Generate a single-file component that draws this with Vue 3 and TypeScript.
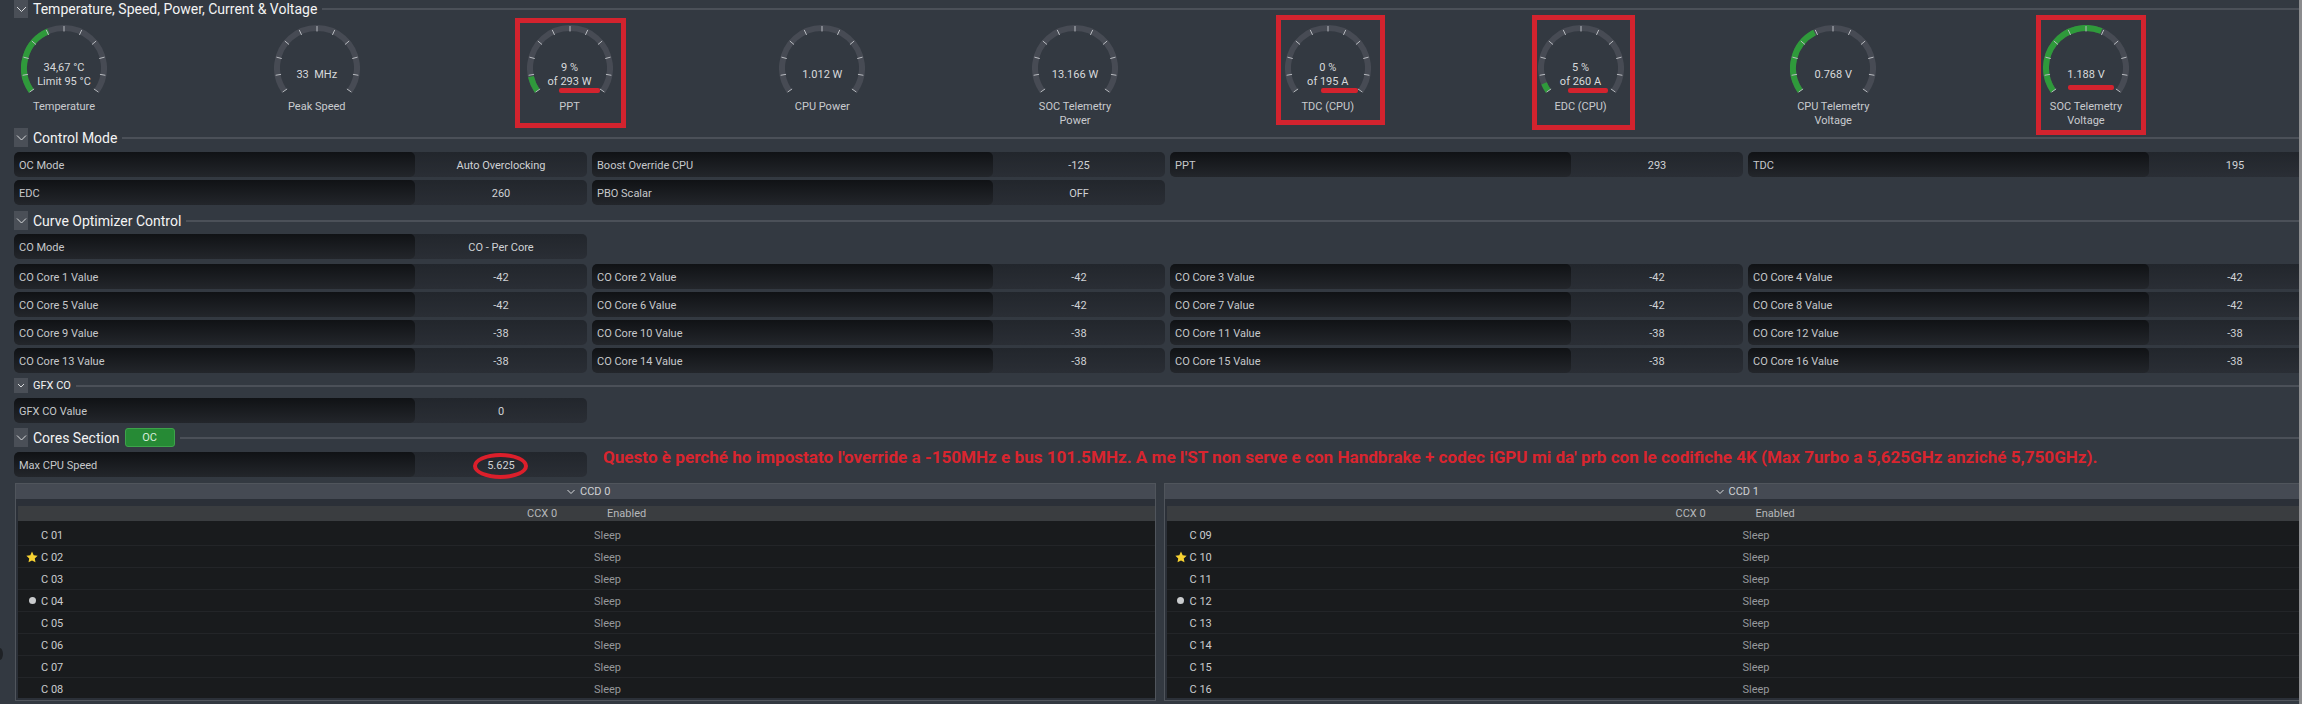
<script setup lang="ts">
interface Gauge { lines: string[]; label: string[]; fill: number }
const gauges: Gauge[] = [
  { lines: ['34,67 °C', 'Limit 95 °C'], label: ['Temperature'], fill: 0.408 },
  { lines: ['33  MHz'], label: ['Peak Speed'], fill: 0 },
  { lines: ['9 %', 'of 293 W'], label: ['PPT'], fill: 0.09 },
  { lines: ['1.012 W'], label: ['CPU Power'], fill: 0 },
  { lines: ['13.166 W'], label: ['SOC Telemetry', 'Power'], fill: 0 },
  { lines: ['0 %', 'of 195 A'], label: ['TDC (CPU)'], fill: 0 },
  { lines: ['5 %', 'of 260 A'], label: ['EDC (CPU)'], fill: 0.05 },
  { lines: ['0.768 V'], label: ['CPU Telemetry', 'Voltage'], fill: 0.39 },
  { lines: ['1.188 V'], label: ['SOC Telemetry', 'Voltage'], fill: 0.59 },
]
const C = 43
const polar = (deg: number, r: number): [number, number] => {
  const a = (deg * Math.PI) / 180
  return [C + r * Math.sin(a), C - r * Math.cos(a)]
}
const arc = (from: number, to: number): string => {
  const [x1, y1] = polar(from, 40)
  const [x2, y2] = polar(to, 40)
  return `M${x1.toFixed(2)} ${y1.toFixed(2)}A40 40 0 ${to - from > 180 ? 1 : 0} 1 ${x2.toFixed(2)} ${y2.toFixed(2)}`
}
const ring = arc(-125, 125)
const fillPath = (f: number): string => arc(-125, -125 + 250 * f)
const ticks = Array.from({ length: 11 }, (_, i) => {
  const d = -125 + i * 25
  const [x1, y1] = polar(d, 36.5)
  const [x2, y2] = polar(d, 42)
  return { x1, y1, x2, y2 }
})

const control = [
  ['OC Mode', 'Auto Overclocking'], ['Boost Override CPU', '-125'], ['PPT', '293'], ['TDC', '195'],
  ['EDC', '260'], ['PBO Scalar', 'OFF'],
]
const coValues = [-42, -42, -42, -42, -42, -42, -42, -42, -38, -38, -38, -38, -38, -38, -38, -38]
const coRows = coValues.map((v, i) => [`CO Core ${i + 1} Value`, String(v)])

const pad = (n: number): string => String(n).padStart(2, '0')
const ccds = [0, 1].map((c) => ({
  name: `CCD ${c}`,
  cores: Array.from({ length: 8 }, (_, i) => ({
    name: `C ${pad(c * 8 + i + 1)}`,
    star: i === 1,
    dot: i === 3,
  })),
}))
</script>

<template>
  <div class="page">
    <main class="main">
      <header class="head first">
        <span class="chev"><svg width="14" height="18" viewBox="0 0 14 18"><polyline points="3,7 7.5,11.5 12,7" /></svg></span>
        <span class="title">Temperature, Speed, Power, Current &amp; Voltage</span>
        <span class="rule"></span>
      </header>

      <section class="gauges">
        <div v-for="g in gauges" :key="g.label.join()" class="gauge">
          <div class="dial">
            <svg width="86" height="70" viewBox="0 0 86 70">
              <path :d="ring" class="ring" />
              <path v-if="g.fill > 0" :d="fillPath(g.fill)" class="fill" />
              <line v-for="(t, i) in ticks" :key="i" :x1="t.x1" :y1="t.y1" :x2="t.x2" :y2="t.y2" class="tick" />
            </svg>
            <div class="read"><span v-for="l in g.lines" :key="l">{{ l }}</span></div>
          </div>
          <div class="glabel"><span v-for="l in g.label" :key="l">{{ l }}</span></div>
        </div>
      </section>

      <header class="head">
        <span class="chev"><svg width="14" height="19" viewBox="0 0 14 19"><polyline points="3,7.5 7.5,12 12,7.5" /></svg></span>
        <span class="title">Control Mode</span>
        <span class="rule"></span>
      </header>
      <section class="grid g-control">
        <div v-for="r in control" :key="r[0]" class="row">
          <span class="k">{{ r[0] }}</span><span class="v">{{ r[1] }}</span>
        </div>
      </section>

      <header class="head h-curve">
        <span class="chev"><svg width="14" height="19" viewBox="0 0 14 19"><polyline points="3,7.5 7.5,12 12,7.5" /></svg></span>
        <span class="title">Curve Optimizer Control</span>
        <span class="rule"></span>
      </header>
      <section class="grid g-mode">
        <div class="row"><span class="k">CO Mode</span><span class="v">CO - Per Core</span></div>
      </section>
      <section class="grid g-core">
        <div v-for="r in coRows" :key="r[0]" class="row">
          <span class="k">{{ r[0] }}</span><span class="v">{{ r[1] }}</span>
        </div>
      </section>

      <header class="head small">
        <span class="chev"><svg width="14" height="15" viewBox="0 0 14 15"><polyline points="4,6 7,9 10,6" /></svg></span>
        <span class="title">GFX CO</span>
        <span class="rule"></span>
      </header>
      <section class="grid g-gfx">
        <div class="row"><span class="k">GFX CO Value</span><span class="v">0</span></div>
      </section>

      <header class="head h-cores">
        <span class="chev"><svg width="14" height="19" viewBox="0 0 14 19"><polyline points="3,7.5 7.5,12 12,7.5" /></svg></span>
        <span class="title">Cores Section</span>
        <span class="oc">OC</span>
        <span class="rule"></span>
      </header>
      <section class="grid g-max">
        <div class="row"><span class="k">Max CPU Speed</span><span class="v">5.625</span></div>
        <p class="note">Questo è perché ho impostato l'override a -150MHz e bus 101.5MHz. A me l'ST non serve e con Handbrake + codec iGPU mi da' prb con le codifiche 4K (Max 7urbo a 5,625GHz anziché 5,750GHz).</p>
      </section>

      <section class="panels">
        <div v-for="c in ccds" :key="c.name" class="panel">
          <div class="ccd">
            <svg width="10" height="8" viewBox="0 0 10 8"><polyline points="1.5,2 5,5.5 8.5,2" /></svg>
            <span>{{ c.name }}</span>
          </div>
          <div class="sub"><span class="ccx">CCX 0</span><span class="en">Enabled</span></div>
          <div class="body">
            <div v-for="core in c.cores" :key="core.name" class="core">
              <span class="mark">
                <svg v-if="core.star" width="12" height="12" viewBox="0 0 24 24"><path d="M12 1l3.4 7.3 7.9 1-5.8 5.5 1.5 7.9L12 18.8l-7 3.9 1.5-7.9L.7 9.3l7.9-1z" class="star" /></svg>
                <i v-else-if="core.dot" class="dot"></i>
              </span>
              <span class="cname">{{ core.name }}</span>
              <span class="state">Sleep</span>
            </div>
          </div>
        </div>
      </section>

      <i class="mark-box b-ppt"></i>
      <i class="mark-box b-tdc"></i>
      <i class="mark-box b-edc"></i>
      <i class="mark-box b-soc"></i>
      <i class="under u-ppt"></i>
      <i class="under u-tdc"></i>
      <i class="under u-edc"></i>
      <i class="under u-soc"></i>
      <i class="ellipse"></i>
      <i class="notch"></i>
    </main>
    <div class="scroll"></div>
  </div>
</template>

<style>
html, body { margin: 0; background: #333941; overflow: hidden; }
</style>

<style scoped>
.page {
  display: flex;
  width: 2302px;
  height: 704px;
  overflow: hidden;
  background: #333941;
  font-family: Roboto, "Noto Sans", sans-serif;
  font-size: 11px;
  color: #cfd1d4;
}
.main { position: relative; width: 2299px; height: 704px; overflow: hidden; flex: none; }
.scroll { width: 3px; background: #8b8c8e; flex: none; }

.head { display: flex; align-items: center; height: 19px; padding-left: 14px; gap: 5px; }
.head.first { height: 18px; }
.head.small { height: 15px; margin-top: 5px; }
.h-curve { margin-top: 6px; }
.h-cores { margin-top: 5px; }
.chev { width: 14px; height: 100%; background: #4a4f57; flex: none; display: block; }
.chev svg { display: block; }
.chev polyline, .ccd polyline { fill: none; stroke: #d8dadc; stroke-width: 1; }
.title { font-size: 14px; color: #f4f4f4; white-space: nowrap; }
.small .title { font-size: 11px; }
.rule { flex: 1; height: 2px; background: #4b5058; }
.oc {
  width: 50px;
  height: 19px;
  box-sizing: border-box;
  background: #268a35;
  border: 1px solid #3da34b;
  border-radius: 3px;
  text-align: center;
  line-height: 17px;
  font-size: 11px;
  color: #d7ecd9;
}

.gauges { display: flex; justify-content: space-between; width: 2122px; height: 110px; margin-left: 14px; padding-top: 7px; box-sizing: border-box; }
.gauge { width: 100px; display: flex; flex-direction: column; align-items: center; }
.dial { display: grid; width: 86px; height: 70px; }
.dial > * { grid-area: 1 / 1; }
.dial svg { display: block; }
.ring, .fill { fill: none; stroke-width: 6; }
.ring { stroke: #474b54; }
.fill { stroke: #2f9a3b; }
.tick { stroke: #b9bcc1; stroke-width: 1; }
.read { display: flex; flex-direction: column; align-items: center; justify-content: center; height: 42px; padding-top: 29px; line-height: 14px; color: #d8dadc; white-space: pre; }
.glabel { display: flex; flex-direction: column; align-items: center; margin-top: 5px; line-height: 14px; color: #c9cbcf; white-space: nowrap; }

.grid { display: grid; grid-template-columns: repeat(4, 573px); column-gap: 5px; row-gap: 3px; padding-left: 14px; width: 2400px; }
.g-control { margin-top: 5px; }
.g-mode { margin-top: 4px; }
.g-core { margin-top: 5px; }
.g-gfx { margin-top: 5px; }
.g-max { margin-top: 5px; }
.row {
  display: flex;
  height: 25px;
  border-radius: 5px;
  background: linear-gradient(#22262c, #2a2e35);
  line-height: 27px;
  overflow: hidden;
}
.k {
  width: 401px;
  padding-left: 5px;
  box-sizing: border-box;
  border-radius: 5px;
  background: linear-gradient(#101215, #23262b);
  color: #c6c8cb;
}
.v { flex: 1; text-align: center; color: #d0d2d5; }
.note {
  grid-column: span 3;
  margin: -4px 0 0;
  padding-left: 11px;
  align-self: start;
  line-height: 18px;
  font-size: 17.1px;
  font-weight: 700;
  color: #d9252f;
  white-space: nowrap;
}

.panels { display: flex; gap: 8px; margin: 6px 0 0 15px; }
.panel { box-sizing: border-box; height: 218px; border: 1px solid #50555c; background: #2b3038; padding-bottom: 2px; }
.panel:first-child { width: 1141px; }
.panel:last-child { width: 1136px; border-right: 0; }
.ccd { height: 15px; background: #454a53; display: flex; align-items: center; justify-content: center; gap: 4px; color: #cfd1d4; padding-right: 0; }
.panel .ccd { justify-content: flex-start; padding-left: 550px; }
.sub { display: flex; height: 15px; margin: 7px 0 0 2px; background: #3a3d40; line-height: 16px; color: #b6b8bb; }
.ccx { margin-left: 509px; width: 80px; }
.en { width: 60px; }
.body { margin-left: 2px; height: 177px; background: #191b1d; }
.core { display: flex; align-items: center; height: 22px; border-top: 1px solid #232528; box-sizing: border-box; padding: 2px 0 0 5px; }
.core:first-child { height: 24px; border-top: 0; padding-top: 4px; }
.core:last-child { height: 21px; }
.mark { width: 18px; display: flex; justify-content: center; align-items: center; flex: none; margin-top: -2px; }
.star { fill: #f7d232; }
.dot { display: block; width: 7px; height: 7px; border-radius: 50%; background: #c9cbcd; }
.cname { width: 553px; color: #c9cbce; flex: none; }
.state { color: #96989b; }

.mark-box { position: absolute; box-sizing: border-box; border: 5px solid #d3232e; }
.b-ppt { left: 515px; top: 18px; width: 111px; height: 110px; }
.b-tdc { left: 1276px; top: 15px; width: 109px; height: 110px; }
.b-edc { left: 1532px; top: 15px; width: 103px; height: 115px; }
.b-soc { left: 2036px; top: 15px; width: 110px; height: 120px; }
.under { position: absolute; height: 5px; border-radius: 2px; background: #d3232e; }
.u-ppt { left: 559px; top: 88px; width: 41px; }
.u-tdc { left: 1321px; top: 88px; width: 37px; }
.u-edc { left: 1568px; top: 88px; width: 40px; }
.u-soc { left: 2068px; top: 85px; width: 46px; }
.ellipse { position: absolute; left: 473px; top: 453px; width: 55px; height: 26px; box-sizing: border-box; border: 4px solid #dc1f2b; border-radius: 50%; }
.notch { position: absolute; left: -4px; top: 648px; width: 7px; height: 12px; border-radius: 50%; background: #1f2226; }
</style>
